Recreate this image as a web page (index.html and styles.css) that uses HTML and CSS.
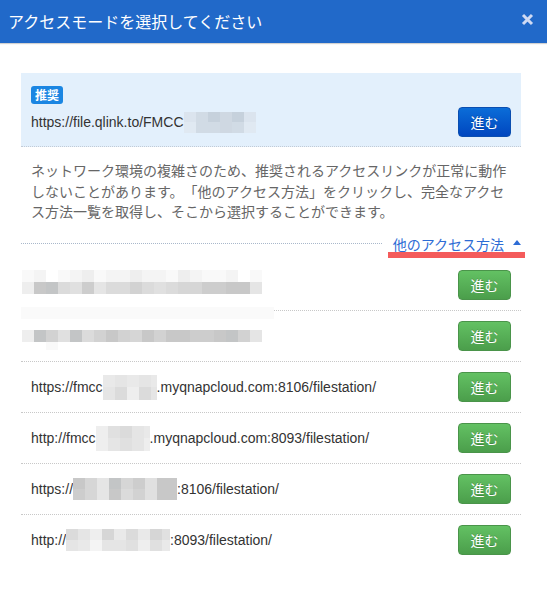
FILE: index.html
```html
<!DOCTYPE html>
<html lang="ja">
<head>
<meta charset="utf-8">
<title>アクセスモードを選択してください</title>
<link rel="stylesheet" href="styles.css">
</head>
<body>
<div class="dialog">
  <header class="hd">
    <span class="title">アクセスモードを選択してください</span>
    <svg class="close" width="13" height="13" viewBox="0 0 13 13" aria-label="close"><path d="M2 2L11 11M11 2L2 11" stroke="#cfdaf3" stroke-width="3"/></svg>
  </header>
  <main class="body">
    <section class="rec">
      <span class="badge">推奨</span>
      <div class="rec-row">
        <div class="url"><span>https://file.qlink.to/FMCC</span><span class="mz mz-rec"><i class="b1"></i><i class="b2"></i><i class="b3"></i><i class="b4"></i><i class="b3"></i><i class="b1"></i><i class="b5"></i><i class="b2"></i><i class="b2"></i><i class="b4"></i><i class="b2"></i><i class="b5"></i></span></div>
        <button class="btn btn-primary">進む</button>
      </div>
    </section>
    <p class="desc">ネットワーク環境の複雑さのため、推奨されるアクセスリンクが正常に動作しないことがあります。「他のアクセス方法」をクリックし、完全なアクセス方法一覧を取得し、そこから選択することができます。</p>
    <div class="more"><span class="more-link">他のアクセス方法<i class="tri"></i></span><span class="mark"></span></div>
    <ul class="list">
      <li class="row">
        <span class="mz mz-full mz-r1"><i class="k1"></i><i class="k2"></i><i class="k0"></i><i class="k1"></i><i class="k2"></i><i class="k3"></i><i class="k1"></i><i class="k2"></i><i class="k2"></i><i class="k3"></i><i class="k2"></i><i class="k2"></i><i class="k1"></i><i class="k3"></i><i class="k2"></i><i class="k1"></i><i class="k1"></i><i class="k2"></i><i class="k0"></i><i class="k1"></i><i class="k3"></i><i class="k11"></i><i class="k12"></i><i class="k7"></i><i class="k6"></i><i class="k10"></i><i class="k5"></i><i class="k7"></i><i class="k7"></i><i class="k9"></i><i class="k7"></i><i class="k6"></i><i class="k7"></i><i class="k8"></i><i class="k8"></i><i class="k10"></i><i class="k10"></i><i class="k11"></i><i class="k11"></i><i class="k5"></i></span>
        <button class="btn btn-go">進む</button>
      </li>
      <li class="row">
        <span class="strip"></span>
        <span class="mz mz-full mz-r2"><i class="k3"></i><i class="k12"></i><i class="k9"></i><i class="k6"></i><i class="k12"></i><i class="k7"></i><i class="k9"></i><i class="k11"></i><i class="k9"></i><i class="k8"></i><i class="k11"></i><i class="k9"></i><i class="k11"></i><i class="k11"></i><i class="k10"></i><i class="k10"></i><i class="k11"></i><i class="k12"></i><i class="k9"></i><i class="k5"></i><i class="k0"></i><i class="k0"></i><i class="k1"></i></span>
        <button class="btn btn-go">進む</button>
      </li>
      <li class="row">
        <div class="url"><span>https://fmcc</span><span class="mz mz-s"><i class="k4"></i><i class="k5"></i><i class="k4"></i><i class="k5"></i><i class="k4"></i><i class="k5"></i><i class="k7"></i><i class="k3"></i><i class="k7"></i><i class="k5"></i></span><span>.myqnapcloud.com:8106/filestation/</span></div>
        <button class="btn btn-go">進む</button>
      </li>
      <li class="row">
        <div class="url"><span>http://fmcc</span><span class="mz mz-s"><i class="k3"></i><i class="k6"></i><i class="k7"></i><i class="k5"></i><i class="k4"></i><i class="k3"></i><i class="k5"></i><i class="k6"></i><i class="k5"></i><i class="k3"></i></span><span>.myqnapcloud.com:8093/filestation/</span></div>
        <button class="btn btn-go">進む</button>
      </li>
      <li class="row">
        <div class="url"><span>https://</span><span class="mz mz-l"><i class="k11"></i><i class="k8"></i><i class="k5"></i><i class="k12"></i><i class="k8"></i><i class="k10"></i><i class="k6"></i><i class="k11"></i><i class="k11"></i><i class="k10"></i><i class="k8"></i><i class="k5"></i><i class="k11"></i><i class="k7"></i><i class="k9"></i><i class="k6"></i><i class="k11"></i><i class="k11"></i></span><span>:8106/filestation/</span></div>
        <button class="btn btn-go">進む</button>
      </li>
      <li class="row">
        <div class="url"><span>http://</span><span class="mz mz-l"><i class="k7"></i><i class="k5"></i><i class="k3"></i><i class="k8"></i><i class="k4"></i><i class="k7"></i><i class="k4"></i><i class="k8"></i><i class="k6"></i><i class="k5"></i><i class="k4"></i><i class="k2"></i><i class="k5"></i><i class="k5"></i><i class="k6"></i><i class="k3"></i><i class="k6"></i><i class="k4"></i></span><span>:8093/filestation/</span></div>
        <button class="btn btn-go">進む</button>
      </li>
    </ul>
  </main>
</div>
</body>
</html>
```
FILE: styles.css
```css
html, body {
  margin: 0;
  padding: 0;
  background: #ffffff;
}

body {
  font-family: "Liberation Sans", "Noto Sans CJK JP", sans-serif;
  color: #333333;
}

.dialog {
  width: 547px;
  min-height: 593px;
  background: #ffffff;
}

.hd {
  height: 43px;
  background: #2169c9;
  display: flex;
  align-items: center;
  justify-content: space-between;
  padding: 0 13px 0 8px;
  box-shadow: 0 1px 1px rgba(0, 0, 0, 0.18);
  box-sizing: border-box;
}

.title {
  font-family: "Noto Sans CJK JP", sans-serif;
  font-size: 16px;
  line-height: 20px;
  color: #ffffff;
  margin-top: -2px;
  text-spacing-trim: space-all;
}

.close {
  display: block;
  margin-top: -5px;
}

.body {
  padding: 30px 26px 0 21px;
}

.rec {
  background: #e3f0fc;
  padding: 13px 10px 9px;
  border-bottom: 1px dotted #c2cbd6;
  display: flex;
  flex-direction: column;
  align-items: flex-start;
}

.badge {
  display: block;
  height: 18px;
  line-height: 18px;
  padding: 0 4px;
  font-family: "Noto Sans CJK JP", sans-serif;
  font-size: 12px;
  font-weight: bold;
  color: #ffffff;
  background: #1b86e2;
  border-radius: 3px;
}

.rec-row {
  align-self: stretch;
  display: flex;
  align-items: center;
  justify-content: space-between;
  margin-top: 3px;
}

.url {
  display: flex;
  align-items: center;
  font-size: 14px;
  line-height: 20px;
  color: #333333;
  white-space: nowrap;
}

.btn {
  width: 53px;
  height: 30px;
  padding: 0;
  border-radius: 4px;
  border: 1px solid transparent;
  font-family: "Noto Sans CJK JP", sans-serif;
  font-size: 14px;
  line-height: 28px;
  color: #ffffff;
  text-shadow: 0 -1px 0 rgba(0, 0, 0, 0.2);
  display: flex;
  align-items: center;
  justify-content: center;
  flex: none;
}

.btn-primary {
  background: linear-gradient(#0b6dd8, #0046bf);
  border-color: #0a4eb0;
}

.btn-go {
  background: linear-gradient(#63c163, #4b9e4b);
  border-color: #4a944a;
}

.desc {
  margin: 0;
  padding: 13px 10px 0;
  font-family: "Noto Sans CJK JP", sans-serif;
  font-size: 14px;
  line-height: 20.5px;
  color: #666666;
  text-spacing-trim: space-all;
}

.more {
  position: relative;
  margin-top: 12px;
  height: 20px;
  display: flex;
  align-items: center;
}

.more::before {
  content: "";
  flex: 1;
  border-top: 1px dotted #a9b8cb;
  margin-right: 11px;
}

.more-link {
  display: flex;
  align-items: center;
  font-family: "Noto Sans CJK JP", sans-serif;
  font-size: 14px;
  line-height: 20px;
  color: #2d6cd5;
}

.tri {
  display: block;
  width: 0;
  height: 0;
  margin-left: 9px;
  margin-top: -2px;
  border-left: 4px solid transparent;
  border-right: 4px solid transparent;
  border-bottom: 5px solid #2d6cd5;
}

.mark {
  position: absolute;
  right: -4px;
  bottom: -4.5px;
  width: 137px;
  height: 6px;
  background: #f45b5b;
}

.list {
  list-style: none;
  margin: 6.5px 0 0;
  padding: 0;
}

.row {
  position: relative;
  display: flex;
  align-items: center;
  justify-content: space-between;
  padding: 10px;
}

.row + .row {
  border-top: 1px dotted #c8c8c8;
}

.strip {
  position: absolute;
  top: -4px;
  left: 0;
  width: 253px;
  height: 12px;
  background: #fafafa;
}

.mz {
  display: inline-grid;
  flex: none;
}

.mz i {
  display: block;
}

.mz-full {
  grid-template-columns: repeat(20, 12px);
  grid-auto-rows: 12px;
  margin-left: -9px;
}

.mz-r1 {
  margin-bottom: 6px;
}

.mz-r2 {
  grid-template-rows: 12px 8px;
  margin-top: 8px;
}

.mz-r2 i:nth-child(21),
.mz-r2 i:nth-child(22) {
  background: transparent;
}

.mz-rec {
  grid-template-columns: repeat(6, 12px);
  grid-auto-rows: 10.5px;
}

.mz-s {
  grid-template-columns: 12px 12px 12px 12px 6px;
  grid-auto-rows: 12.5px;
}

.mz-l {
  grid-template-columns: repeat(8, 12px) 8px;
  grid-auto-rows: 11px;
}

.k0 { background: #ffffff; }
.k1 { background: #f9f9f9; }
.k2 { background: #f4f4f4; }
.k3 { background: #eeeeee; }
.k4 { background: #e9e9e9; }
.k5 { background: #e5e5e5; }
.k6 { background: #e0e0e0; }
.k7 { background: #dbdbdb; }
.k8 { background: #d6d6d6; }
.k9 { background: #d2d2d2; }
.k10 { background: #cdcdcd; }
.k11 { background: #c8c8c8; }
.k12 { background: #c3c5c6; }

.b1 { background: #dbe4ee; }
.b2 { background: #d1dbe5; }
.b3 { background: #c6d1dc; }
.b4 { background: #cfd8e2; }
.b5 { background: #e0e9f2; }
```
